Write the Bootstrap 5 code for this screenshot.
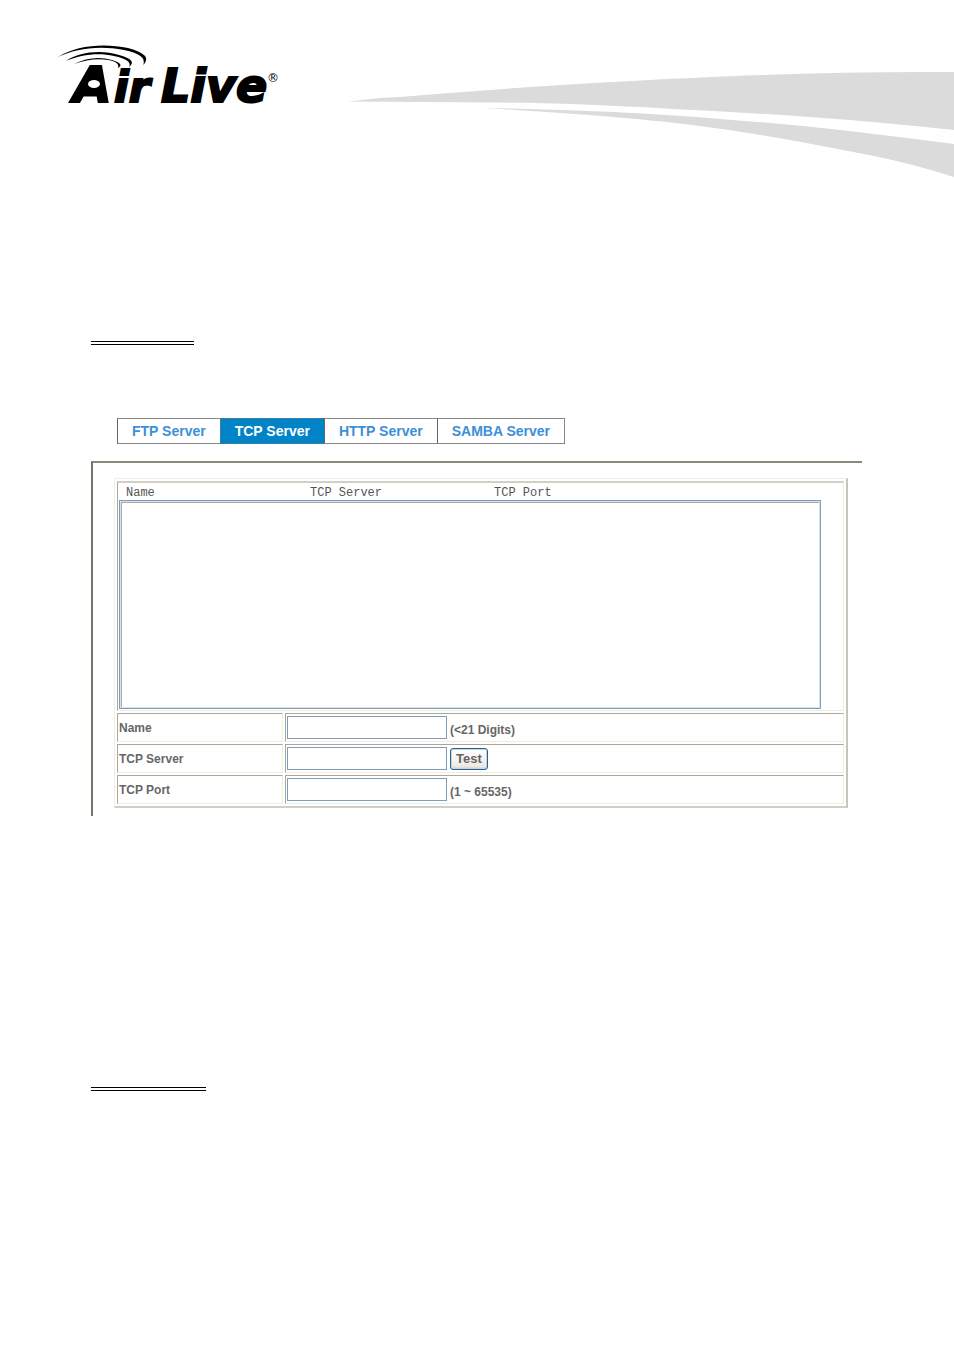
<!DOCTYPE html>
<html lang="en">
<head>
<meta charset="utf-8">
<meta name="viewport" content="width=device-width, initial-scale=1">
<title>TCP Server</title>
<link rel="stylesheet" href="https://cdn.jsdelivr.net/npm/bootstrap@5.3.0/dist/css/bootstrap.min.css">
<style>
body{font-family:"Liberation Sans",Arial,sans-serif;font-size:12px;line-height:16px;color:#666;background:#fff}
.brand-mark{width:222px;height:84px;margin:38px 0 0 56px;overflow:visible}
.brand-mark text{font-family:"DejaVu Sans",sans-serif;font-weight:bold;font-style:italic;fill:#000;stroke:#000}
.swoosh{margin:71px 0 0 68px;height:107px;min-width:0}
.content{margin:163px 92px 0 91px}
.rule{height:4px;border-top:1px solid #000;border-bottom:1px solid #000}
.rule-a{width:103px}
.rule-b{width:115px;margin-top:271px}
.tabs{margin:73px 0 17px 26px}
.tabs .tab-link{font-size:14px;line-height:24px;font-weight:bold;color:#3d8fd6;padding:0 14px;border:1px solid #888;border-left-color:#666;height:26px;text-decoration:none}
.tabs .tab-link + .tab-link{margin-left:-1px}
.tabs .tab-link.active{background:#0083c7;color:#fff;border:1px dotted #777}
.panel{border-top:2px solid #8b897d;border-left:2px solid #77756a;padding:15px 14px 8px 21px}
.form-grid{border-collapse:separate;border-spacing:2px;border:1px solid #efeee0;border-right:2px solid #c6c5b9;border-bottom:2px solid #d0cfc5;table-layout:fixed}
.form-grid th,.form-grid td{border:1px solid #efeddf;border-top-color:#aca899;border-left-color:#aca899;padding:1px;height:29px;vertical-align:middle}
.form-grid .list-cell{border-top:2px solid #d2d0c5;vertical-align:top}
.form-grid .label-col{width:166px}
.list-head{font:12px/18px "Liberation Mono","Courier New",monospace;height:16px;padding-left:7px;color:#555}
.list-head span{width:184px}
.list-box{height:209px;width:calc(100% - 21px);border:1px solid #7f9db9;border-radius:0;outline:1px solid #d8e3ee;outline-offset:-2px;padding:0;background:#fff;box-shadow:inset 3px 3px 0 -1px #aaa;overflow:hidden}
.field{width:160px;height:23px;border:1px solid #7f9db9;padding:0 3px;background:#fff;font-size:12px}
.hint-row{column-gap:3px}
.hint{padding-top:4px}
.test-btn{width:38px;height:22px;border:1px solid #2c5f8c;border-radius:3px;background:linear-gradient(#fff,#ecebe5 85%,#d6d0c5);box-shadow:inset 0 0 0 1px #c4d5e4;color:#666;font-size:13px;font-weight:bold;line-height:18px;padding:0}
</style>
<script src="https://cdn.jsdelivr.net/npm/bootstrap@5.3.0/dist/js/bootstrap.bundle.min.js"></script>
</head>
<body class="min-vh-100">
<header class="d-flex align-items-start">
<svg class="brand-mark flex-shrink-0" viewBox="56 38 222 84" role="img" aria-label="Air Live">
<path d="M58 57C76 45 105 43 128 48Q154 55 143 65Q148 55 124 50C98 45 75 49 58 57ZM66 61C80 51 103 50 119 55Q138 60 129 67Q133 60 114 56C98 52 80 55 66 61ZM74 64C86 58 99 56 112 60Q125 64 118 68Q120 62 108 60C97 58 86 60 74 64Z"/>
<text x="73" y="102" font-size="50" stroke-width="2">A</text>
<path d="M86 91L95 70L101 72L103 91Z"/>
<ellipse cx="94" cy="84" rx="6" ry="4" fill="#fff"/>
<text x="114" y="102" font-size="43" stroke-width="2">ir</text>
<text x="161" y="102" font-size="46" stroke-width="2">Live</text>
<text x="267" y="82" font-size="12" style="font-style:normal;font-weight:normal;stroke:none">®</text>
</svg>
<svg class="swoosh flex-grow-1" viewBox="346 71 608 107" preserveAspectRatio="none" aria-hidden="true">
<path fill="#dbdbdb" d="M348 101.500L380 98 400 97Q505 88 603 82.500T763 75Q850 71.500 954 72V130Q880 122 810 117T673 109Q570 103 497 102.500T348 101.500ZM483 108Q550 109 614 112T732 120Q790 124 849 131T954 144V177Q910 163 869 155T790 140Q740 131 692 125T575 114Q530 111 483 108Z"/>
</svg>
</header>
<main class="content">
<div class="rule rule-a"></div>
<nav class="tabs d-flex" aria-label="Servers">
<a class="tab-link" href="#">FTP Server</a>
<a class="tab-link active" href="#" aria-current="page">TCP Server</a>
<a class="tab-link" href="#">HTTP Server</a>
<a class="tab-link" href="#">SAMBA Server</a>
</nav>
<form class="panel">
<table class="form-grid w-100">
<colgroup><col class="label-col"><col></colgroup>
<tbody>
<tr><td class="list-cell" colspan="2">
<div class="list-head d-flex"><span>Name</span><span>TCP Server</span><span>TCP Port</span></div>
<select class="list-box d-block" size="10" aria-label="TCP servers"></select>
</td></tr>
<tr><th scope="row"><label for="name">Name</label></th>
<td><div class="hint-row d-flex align-items-center"><input class="field" id="name" type="text"><b class="hint">(&lt;21 Digits)</b></div></td></tr>
<tr><th scope="row"><label for="server">TCP Server</label></th>
<td><div class="hint-row d-flex align-items-center"><input class="field" id="server" type="text"><button class="test-btn" type="button">Test</button></div></td></tr>
<tr><th scope="row"><label for="port">TCP Port</label></th>
<td><div class="hint-row d-flex align-items-center"><input class="field" id="port" type="text"><b class="hint">(1 ~ 65535)</b></div></td></tr>
</tbody>
</table>
</form>
<div class="rule rule-b"></div>
</main>
</body>
</html>
